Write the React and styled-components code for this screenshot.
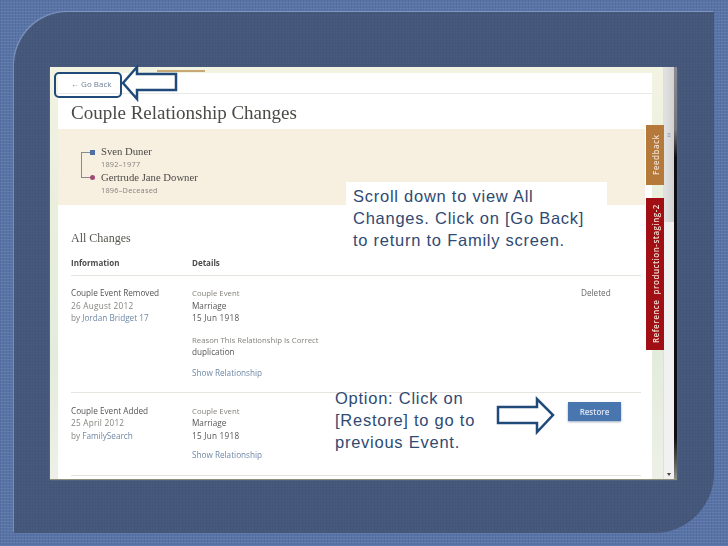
import React from 'react';
import styled, { createGlobalStyle } from 'styled-components';

const Global = createGlobalStyle`
  html, body { margin: 0; padding: 0; }
  body { width: 728px; height: 546px; overflow: hidden; font-family: "Open Sans", sans-serif; }
`;

const Slide = styled.div`
  width: 728px;
  height: 546px;
  box-sizing: border-box;
  padding: 12px 14px 13px 14px;
  background-color: #5873a6;
  background-image:
    repeating-linear-gradient(0deg, rgba(255,255,255,.07) 0 1px, transparent 1px 3px),
    repeating-linear-gradient(90deg, rgba(30,50,100,.1) 0 1px, transparent 1px 3px);
`;

const Panel = styled.div`
  position: relative;
  height: 521px;
  box-sizing: border-box;
  padding: 55px 37px 54px 36px;
  background-color: #475a7d;
  background-image:
    repeating-linear-gradient(90deg, rgba(20,30,60,.06) 0 1px, transparent 1px 3px),
    repeating-linear-gradient(0deg, rgba(20,30,60,.05) 0 1px, transparent 1px 3px);
  border-radius: 54px 0 60px 0;
  box-shadow: -1px -1px 1px rgba(190,205,230,.35);
`;

const Shot = styled.div`
  display: flex;
  height: 412px;
  overflow: hidden;
  box-shadow: 0 1px 1px #8f8f80;
`;

const Page = styled.div`
  flex: 1;
  min-width: 0;
  padding: 6px 11px 0 8px;
  background: linear-gradient(180deg, #f3f3e2 0%, #e6eedb 45%, #e3ecdc 70%, #edf0e6 100%);
  filter: blur(0.4px);
`;

const Sheet = styled.div`
  height: 100%;
  background: #fff;
`;

const BackBar = styled.div`
  height: 20px;
  padding-left: 13px;
  display: flex;
  align-items: center;
  border-bottom: 1px solid #e9e9e6;
  font-size: 8px;
  color: #6c7f95;
`;

const Title = styled.h1`
  margin: 0;
  height: 35px;
  padding: 3px 0 0 13px;
  box-sizing: border-box;
  display: flex;
  align-items: center;
  font: 400 19px "Liberation Serif", "DejaVu Serif", serif;
  color: #4a4a46;
`;

const Couple = styled.div`
  height: 76px;
  margin-right: 7px;
  padding: 16px 0 0 23px;
  box-sizing: border-box;
  display: flex;
  gap: 2px;
  background: #f7efe0;
`;

const Bracket = styled.div`
  position: relative;
  width: 8px;
  height: 24px;
  margin-top: 7px;
  border: 1px solid #8a8a8a;
  border-right: 0;
`;

const Marker = styled.span`
  position: absolute;
  left: 8px;
  width: 5px;
  height: 5px;
  ${(p) => (p.$female
    ? 'bottom: -3px; border-radius: 50%; background: #a24a72;'
    : 'top: -3px; background: #4d6fa3;')}
`;

const People = styled.div`
  margin-left: 9px;
`;

const PersonName = styled.div`
  font: 400 10.7px/13px "Liberation Serif", serif;
  color: #4b4b48;
`;

const Lifespan = styled.div`
  font-size: 7.4px;
  line-height: 13px;
  letter-spacing: .2px;
  color: #85837e;
`;

const Changes = styled.div`
  padding: 23px 11px 0 13px;
`;

const SectionTitle = styled.h2`
  margin: 0 0 9px;
  font: 400 12px/20px "Liberation Serif", serif;
  color: #55554f;
`;

const Row = styled.div`
  display: grid;
  grid-template-columns: 121px 1fr auto;
  border-bottom: 1px solid #e5e4df;
  padding-bottom: ${(p) => p.$pb}px;
  padding-top: ${(p) => p.$pt}px;
`;

const HeadCell = styled.div`
  font-size: 8px;
  font-weight: 700;
  line-height: 12px;
  color: #4c4c4c;
`;

const Line = styled.div`
  font-size: ${(p) => (p.$small ? 7.75 : 8.2)}px;
  line-height: 12.6px;
  letter-spacing: ${(p) => (p.$wide ? '.25px' : '0')};
  color: ${(p) => p.$color || '#555'};
  margin-top: ${(p) => p.$mt || 0}px;
`;

const Person = styled.span`
  color: #6f88a6;
`;

const Status = styled.div`
  width: 60px;
  font-size: 8.2px;
  line-height: 12.6px;
  color: #6a6a6a;
`;

const RestoreCell = styled.div`
  width: 73px;
  display: flex;
  align-items: flex-start;
`;

const RestoreButton = styled.button`
  width: 53px;
  height: 19px;
  margin-top: -3px;
  padding: 0;
  border: 0;
  background: #4a76b0;
  box-shadow: 0 1px 2px rgba(60,80,120,.5);
  color: #dde6f2;
  font: 600 8px "Open Sans", sans-serif;
`;

const Scrollbar = styled.div`
  position: relative;
  width: 11px;
  background: #f1f1f1;
  border-left: 1px solid #dfdfdb;
  box-sizing: border-box;
`;

const Thumb = styled.div`
  height: 155px;
  background: linear-gradient(90deg, #e2e2e2, #d2d2d4);
  display: flex;
  justify-content: center;
  padding-top: 65px;
  box-sizing: border-box;
  color: #8a8a8a;
  font-size: 6px;
  line-height: 6px;
`;

const ScrollDown = styled.div`
  position: absolute;
  left: 3px;
  bottom: 3px;
  border: 2.5px solid transparent;
  border-top: 3px solid #444;
  border-bottom: 0;
`;

const Edge = styled.div`
  width: 3px;
  background: linear-gradient(180deg, #8a8a90 0%, #77777c 15%, #0e0e12 22%, #0e0e12 90%, #8d8d8a 100%);
`;

const SideTab = styled.div`
  position: absolute;
  left: 632px;
  top: ${(p) => p.$top}px;
  width: 18px;
  height: ${(p) => p.$height}px;
  display: flex;
  align-items: center;
  justify-content: center;
  background: ${(p) => p.$bg};
  color: #f0e0d4;
  font-size: 8px;
  font-weight: 600;
  letter-spacing: .5px;
  white-space: pre;
  writing-mode: vertical-rl;
  transform: rotate(180deg);
  filter: blur(0.3px);
`;

const Note = styled.div`
  position: absolute;
  left: ${(p) => p.$left}px;
  top: ${(p) => p.$top}px;
  width: ${(p) => p.$width}px;
  padding: ${(p) => p.$padding || 0};
  box-sizing: border-box;
  background: ${(p) => (p.$plain ? 'transparent' : '#fff')};
  color: #2f4a73;
  font: 400 16.5px/22px "Liberation Sans", Arial, sans-serif;
  letter-spacing: .75px;
  white-space: nowrap;
`;

const GoBackFrame = styled.div`
  position: absolute;
  left: 40px;
  top: 60px;
  width: 68px;
  height: 26px;
  box-sizing: border-box;
  border: 2.5px solid #1f4a7a;
  border-radius: 5px;
`;

const Arrow = styled.svg`
  position: absolute;
  left: ${(p) => p.$left}px;
  top: ${(p) => p.$top}px;
  overflow: visible;
`;

const TabTop = styled.div`
  position: absolute;
  left: 143px;
  top: 58px;
  width: 48px;
  height: 2px;
  background: #c9a878;
`;

export default function App() {
  return (
    <Slide>
      <Global />
      <Panel>
        <Shot>
          <Page>
            <Sheet>
              <BackBar>← Go Back</BackBar>
              <Title>Couple Relationship Changes</Title>
              <Couple>
                <Bracket>
                  <Marker />
                  <Marker $female />
                </Bracket>
                <People>
                  <PersonName>Sven Duner</PersonName>
                  <Lifespan>1892–1977</Lifespan>
                  <PersonName>Gertrude Jane Downer</PersonName>
                  <Lifespan>1896–Deceased</Lifespan>
                </People>
              </Couple>
              <Changes>
                <SectionTitle>All Changes</SectionTitle>
                <Row $pt={0} $pb={6}>
                  <HeadCell>Information</HeadCell>
                  <HeadCell>Details</HeadCell>
                </Row>
                <Row $pt={11} $pb={12}>
                  <div>
                    <Line>Couple Event Removed</Line>
                    <Line $wide $color="#85837e">26 August 2012</Line>
                    <Line $color="#85837e">by <Person>Jordan Bridget 17</Person></Line>
                  </div>
                  <div>
                    <Line $small $color="#85837e">Couple Event</Line>
                    <Line>Marriage</Line>
                    <Line $wide>15 Jun 1918</Line>
                    <Line $small $mt={9} $color="#85837e">Reason This Relationship Is Correct</Line>
                    <Line>duplication</Line>
                    <Line $mt={8} $color="#6f88a6">Show Relationship</Line>
                  </div>
                  <Status>Deleted</Status>
                </Row>
                <Row $pt={12} $pb={13}>
                  <div>
                    <Line>Couple Event Added</Line>
                    <Line $wide $color="#85837e">25 April 2012</Line>
                    <Line $color="#85837e">by <Person>FamilySearch</Person></Line>
                  </div>
                  <div>
                    <Line $small $color="#85837e">Couple Event</Line>
                    <Line>Marriage</Line>
                    <Line $wide>15 Jun 1918</Line>
                    <Line $mt={7} $color="#6f88a6">Show Relationship</Line>
                  </div>
                  <RestoreCell>
                    <RestoreButton type="button">Restore</RestoreButton>
                  </RestoreCell>
                </Row>
              </Changes>
            </Sheet>
          </Page>
          <Scrollbar>
            <Thumb>≡</Thumb>
            <ScrollDown />
          </Scrollbar>
          <Edge />
        </Shot>

        <TabTop />
        <SideTab $top={113} $height={60} $bg="#b5793a">Feedback</SideTab>
        <SideTab $top={186} $height={152} $bg="#a10f14">Reference  production-staging-2</SideTab>

        <Note $left={332} $top={170} $width={261} $padding="3px 0 2px 7px">
          Scroll down to view All<br />Changes. Click on [Go Back]<br />to return to Family screen.
        </Note>
        <Note $plain $left={321} $top={375} $width={150}>
          Option: Click on<br />[Restore] to go to<br />previous Event.
        </Note>

        <GoBackFrame />
        <Arrow $left={108} $top={54} width="55" height="34" viewBox="0 0 55 34">
          <path d="M1 17 L15 1 V8 H54 V24 H15 V33 Z" fill="#fff" stroke="#1f4a7a" strokeWidth="2.5" />
        </Arrow>
        <Arrow $left={483} $top={386} width="57" height="36" viewBox="0 0 57 36">
          <path d="M1 9 H40 V1 L56 17 L40 34 V25 H1 Z" fill="none" stroke="#1f4a7a" strokeWidth="2.5" />
        </Arrow>
      </Panel>
    </Slide>
  );
}
